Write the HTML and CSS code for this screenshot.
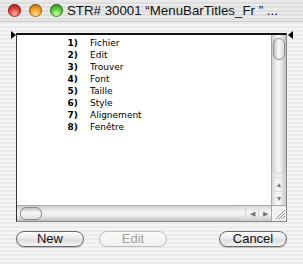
FILE: index.html
```html
<!DOCTYPE html>
<html lang="fr">
<head>
    <meta charset="UTF-8">
    <title>STR# 30001</title>
    <link rel="stylesheet" href="styles.css">
</head>
<body>
    <div class="window">
        <div class="titlebar">
            <span class="light red"></span>
            <span class="light orange"></span>
            <span class="light green"></span>
            <span class="title">STR# 30001 “MenuBarTitles_Fr ” ...</span>
        </div>
        <div class="content">
            <div class="listbox">
                <span class="marker left"></span>
                <span class="marker right"></span>
                <div class="list">
                    <div class="row"><span class="num">1)</span><span>Fichier</span></div>
                    <div class="row"><span class="num">2)</span><span>Edit</span></div>
                    <div class="row"><span class="num">3)</span><span>Trouver</span></div>
                    <div class="row"><span class="num">4)</span><span>Font</span></div>
                    <div class="row"><span class="num">5)</span><span>Taille</span></div>
                    <div class="row"><span class="num">6)</span><span>Style</span></div>
                    <div class="row"><span class="num">7)</span><span>Alignement</span></div>
                    <div class="row"><span class="num">8)</span><span>Fenêtre</span></div>
                </div>
                <div class="vscroll">
                    <div class="vtrack"><div class="vthumb"></div></div>
                    <div class="arrow">&#9650;</div>
                    <div class="arrow">&#9660;</div>
                </div>
                <div class="hscroll">
                    <div class="htrack"><div class="hthumb"></div></div>
                    <div class="arrow">&#9664;</div>
                    <div class="arrow">&#9654;</div>
                </div>
                <div class="grow">
                    <svg width="14" height="14" viewBox="0 0 14 14">
                        <path d="M4 13 L13 4 M7 13 L13 7 M10 13 L13 10" stroke="#888" stroke-width="1" fill="none"/>
                        <path d="M5 13 L13 5 M8 13 L13 8 M11 13 L13 11" stroke="#fff" stroke-width="1" fill="none"/>
                    </svg>
                </div>
            </div>
            <div class="buttons">
                <button class="btn">New</button>
                <button class="btn" disabled>Edit</button>
                <span class="spacer"></span>
                <button class="btn">Cancel</button>
            </div>
        </div>
    </div>
</body>
</html>
```

FILE: styles.css
```css
* {
    margin: 0;
    padding: 0;
    box-sizing: border-box;
}
body {
    font-family: "Liberation Sans", Arial, sans-serif;
    background: #fff;
}
.window {
    width: 303px;
    height: 264px;
    background: repeating-linear-gradient(to bottom, #f4f4f4 0, #f4f4f4 2px, #ebebeb 2px, #ebebeb 4px);
}
.titlebar {
    height: 22px;
    display: flex;
    align-items: center;
    padding-left: 8px;
    gap: 8px;
    background: repeating-linear-gradient(to bottom, #eaeaea 0, #eaeaea 2px, #dedede 2px, #dedede 4px);
    border-bottom: 1px solid #c8c8c8;
}
.light {
    width: 13px;
    height: 13px;
    border-radius: 50%;
    flex: none;
    box-shadow: inset 0 0 0 1px rgba(0, 0, 0, 0.35);
}
.red {
    background: radial-gradient(circle at 50% 75%, #ffb0a8 0, #e0453c 45%, #a0100c 100%);
}
.orange {
    background: radial-gradient(circle at 50% 75%, #ffe0a0 0, #f0a020 45%, #b05800 100%);
}
.green {
    background: radial-gradient(circle at 50% 75%, #c8ffa8 0, #5cc83c 45%, #1e7a10 100%);
    margin-right: -4px;
}
.title {
    font-size: 13.3px;
    color: #111;
    white-space: nowrap;
}
.content {
    padding: 11px 16px 0 16px;
}
.listbox {
    position: relative;
    width: 271px;
    height: 189px;
    background: #fff;
    border: 1px solid #8a8a8a;
    border-top: 2px solid #111;
    border-left: 1px solid #333;
    display: grid;
    grid-template-columns: 1fr 15px;
    grid-template-rows: 1fr 16px;
}
.marker {
    position: absolute;
    top: -4px;
    width: 0;
    height: 0;
    border-top: 4px solid transparent;
    border-bottom: 4px solid transparent;
}
.marker.left {
    left: -6px;
    border-left: 5px solid #000;
}
.marker.right {
    right: -7px;
    border-right: 5px solid #000;
}
.list {
    padding: 2px 0 0 0;
    font-family: "DejaVu Sans", sans-serif;
    font-size: 9px;
    line-height: 12px;
    color: #000;
}
.row {
    display: flex;
}
.num {
    width: 73px;
    text-align: right;
    padding-right: 12px;
    font-weight: bold;
}
.vscroll {
    display: flex;
    flex-direction: column;
    border-left: 1px solid #a8a8a8;
    background: linear-gradient(to right, #d8d8d8, #f6f6f6 40%, #f0f0f0 60%, #c8c8c8);
}
.vtrack {
    flex: 1;
    padding: 3px 1px 0 1px;
    border-bottom-left-radius: 7px;
    border-bottom-right-radius: 7px;
    background: linear-gradient(to right, #cfcfcf, #f8f8f8 45%, #e6e6e6 70%, #bcbcbc);
    margin-bottom: 4px;
    box-shadow: 0 1px 1px rgba(0, 0, 0, 0.15);
}
.vthumb {
    height: 22px;
    border-radius: 6px;
    border: 1px solid #8c8c8c;
    background: linear-gradient(to right, #c4c4c4, #f8f8f8 45%, #dedede);
}
.arrow {
    height: 14px;
    font-size: 7px;
    color: #7a7a7a;
    display: flex;
    align-items: center;
    justify-content: center;
    border-top: 1px solid #d8d8d8;
}
.hscroll {
    display: flex;
    border-top: 1px solid #a8a8a8;
    background: linear-gradient(to bottom, #d8d8d8, #f6f6f6 40%, #f0f0f0 60%, #c8c8c8);
}
.htrack {
    flex: 1;
    padding: 1px 0 1px 3px;
    border-top-right-radius: 7px;
    border-bottom-right-radius: 7px;
    background: linear-gradient(to bottom, #cfcfcf, #f8f8f8 45%, #e6e6e6 70%, #bcbcbc);
    margin-right: 4px;
}
.hthumb {
    width: 22px;
    height: 100%;
    border-radius: 6px;
    border: 1px solid #8c8c8c;
    background: linear-gradient(to bottom, #c4c4c4, #f8f8f8 45%, #dedede);
}
.hscroll .arrow {
    width: 13px;
    height: auto;
    border-top: none;
    border-left: 1px solid #d8d8d8;
}
.grow {
    border-top: 1px solid #a8a8a8;
    border-left: 1px solid #a8a8a8;
    background: #f0f0f0;
}
.grow svg {
    display: block;
}
.buttons {
    display: flex;
    gap: 15px;
    margin-top: 9px;
}
.spacer {
    flex: 1;
}
.btn {
    height: 16px;
    width: 68px;
    border-radius: 8px;
    border: 1px solid #6a6a6a;
    background: linear-gradient(to bottom, #fdfdfd, #e8e8e8 50%, #dcdcdc 55%, #f4f4f4);
    font-family: "Liberation Sans", Arial, sans-serif;
    font-size: 13px;
    line-height: 14px;
    color: #111;
    box-shadow: 0 1px 1px rgba(0, 0, 0, 0.2);
}
.btn:disabled {
    border-color: #bdbdbd;
    color: #a0a0a0;
    box-shadow: none;
    background: linear-gradient(to bottom, #fafafa, #f0f0f0);
}
```
